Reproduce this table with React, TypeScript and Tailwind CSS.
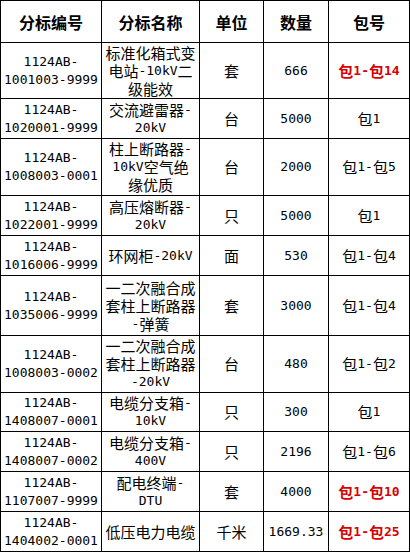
type Row = {
  code: string[]
  name: string[]
  unit: string
  qty: string
  pkg: string
  red?: boolean
  h: string
}

const rows: Row[] = [
  { code: ['1124AB-', '1001003-9999'], name: ['标准化箱式变', '电站-10kV二', '级能效'], unit: '套', qty: '666', pkg: '包1-包14', red: true, h: 'h-[55px]' },
  { code: ['1124AB-', '1020001-9999'], name: ['交流避雷器-', '20kV'], unit: '台', qty: '5000', pkg: '包1', h: 'h-[39px]' },
  { code: ['1124AB-', '1008003-0001'], name: ['柱上断路器-', '10kV空气绝', '缘优质'], unit: '台', qty: '2000', pkg: '包1-包5', h: 'h-[56px]' },
  { code: ['1124AB-', '1022001-9999'], name: ['高压熔断器-', '20kV'], unit: '只', qty: '5000', pkg: '包1', h: 'h-[39px]' },
  { code: ['1124AB-', '1016006-9999'], name: ['环网柜-20kV'], unit: '面', qty: '530', pkg: '包1-包4', h: 'h-[39px]' },
  { code: ['1124AB-', '1035006-9999'], name: ['一二次融合成', '套柱上断路器', '-弹簧'], unit: '套', qty: '3000', pkg: '包1-包4', h: 'h-[59px]' },
  { code: ['1124AB-', '1008003-0002'], name: ['一二次融合成', '套柱上断路器', '-20kV'], unit: '台', qty: '480', pkg: '包1-包2', h: 'h-[56px]' },
  { code: ['1124AB-', '1408007-0001'], name: ['电缆分支箱-', '10kV'], unit: '只', qty: '300', pkg: '包1', h: 'h-[38px]' },
  { code: ['1124AB-', '1408007-0002'], name: ['电缆分支箱-', '400V'], unit: '只', qty: '2196', pkg: '包1-包6', h: 'h-[39px]' },
  { code: ['1124AB-', '1107007-9999'], name: ['配电终端-', 'DTU'], unit: '套', qty: '4000', pkg: '包1-包10', red: true, h: 'h-[39px]' },
  { code: ['1124AB-', '1404002-0001'], name: ['低压电力电缆'], unit: '千米', qty: '1669.33', pkg: '包1-包25', red: true, h: 'h-[39px]' },
]

const mono = "font-['DejaVu_Sans_Mono',monospace] text-[13px]"

// one text line; latin runs get the narrow mono face like the original's half-width glyphs
function Line({ text }: { text: string }) {
  const parts = text.split(/([\x00-\x7F]+)/).filter(Boolean)
  return (
    <div className="flex h-[18px] items-center justify-center">
      {parts.map((p, i) =>
        /^[\x00-\x7F]+$/.test(p) ? (
          <span key={i} className={`${mono} leading-[18px]`}>
            {p}
          </span>
        ) : (
          <span key={i} className="leading-[18px]">
            {p}
          </span>
        )
      )}
    </div>
  )
}

function Cell({ children, className = '' }: { children: React.ReactNode; className?: string }) {
  return (
    <div className={`flex flex-col items-center justify-center bg-white text-center whitespace-nowrap overflow-hidden ${className}`}>
      {children}
    </div>
  )
}

export default function App() {
  const heads = ['分标编号', '分标名称', '单位', '数量', '包号']
  return (
    <div className="w-[410px] h-[552px] bg-white font-['Noto_Sans_CJK_SC',sans-serif] text-[15px] text-black">
      <div className="grid grid-cols-[100px_97px_63px_64px_80px] gap-px bg-black p-px">
        {heads.map((h) => (
          <Cell key={h} className="h-[41px] font-bold text-[16px]">
            {h}
          </Cell>
        ))}
        {rows.map((r, i) => (
          <div key={i} className="contents">
            <Cell className={r.h}>
              {r.code.map((c) => (
                <Line key={c} text={c} />
              ))}
            </Cell>
            <Cell className={r.h}>
              {r.name.map((n) => (
                <Line key={n} text={n} />
              ))}
            </Cell>
            <Cell className={r.h}>
              <Line text={r.unit} />
            </Cell>
            <Cell className={r.h}>
              <Line text={r.qty} />
            </Cell>
            <Cell className={`${r.h} ${r.red ? 'font-bold text-[#d80000]' : ''}`}>
              <Line text={r.pkg} />
            </Cell>
          </div>
        ))}
      </div>
    </div>
  )
}
